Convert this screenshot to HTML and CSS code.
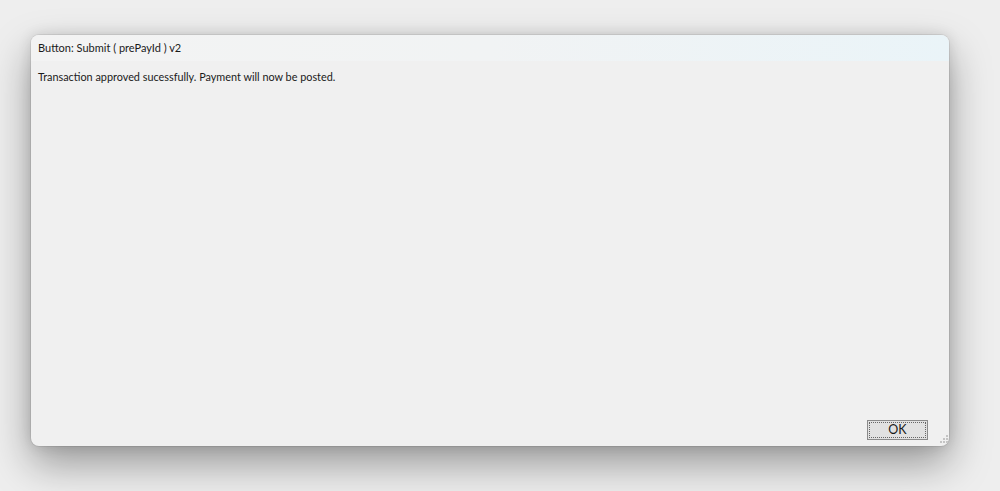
FILE: index.html
```html
<!DOCTYPE html>
<html>
<head>
<meta charset="utf-8">
<link rel="stylesheet" href="styles.css">
</head>
<body>
<div class="stage">
  <div class="window">
    <div class="titlebar">Button: Submit ( prePayId ) v2</div>
    <div class="content">
      <p class="message">Transaction approved sucessfully. Payment will now be posted.</p>
      <div class="actions">
        <button class="ok"><span class="focus">OK</span></button>
      </div>
    </div>
    <svg class="grip" width="10" height="10" viewBox="0 0 10 10">
      <g fill="#c4c4c4">
        <rect x="8" y="0" width="2" height="2"/>
        <rect x="5" y="3" width="2" height="2"/><rect x="8" y="3" width="2" height="2"/>
        <rect x="2" y="6" width="2" height="2"/><rect x="5" y="6" width="2" height="2"/><rect x="8" y="6" width="2" height="2"/>
      </g>
    </svg>
  </div>
</div>
</body>
</html>
```

FILE: styles.css
```css
html, body {
  margin: 0;
  padding: 0;
  background: #eeeeee;
  width: 1000px;
  height: 491px;
  overflow: hidden;
  font-family: "Lato", "Noto Sans", sans-serif;
}
.stage {
  padding: 35px 0 0 31px;
}
.window {
  position: relative;
  width: 918px;
  height: 411px;
  background: #f0f0f0;
  border-radius: 8px;
  box-shadow: 0 0 0 1px rgba(0,0,0,0.07), 0 18px 40px rgba(0,0,0,0.36), 0 0 14px rgba(0,0,0,0.12);
  display: flex;
  flex-direction: column;
  overflow: hidden;
}
.titlebar {
  height: 26px;
  line-height: 26px;
  padding-left: 7px;
  font-size: 11px;
  color: #1a1a1a;
  background: linear-gradient(to right, #f3f3f3 0%, #f1f3f4 50%, #eaf4f8 100%);
}
.content {
  flex: 1;
  display: flex;
  flex-direction: column;
  padding: 0 21px 6px 7px;
}
.message {
  margin: 8px 0 0 0;
  font-size: 10.85px;
  color: #1a1a1a;
  line-height: 16px;
  flex: 1;
}
.actions {
  display: flex;
  justify-content: flex-end;
}
.ok {
  width: 61px;
  height: 20px;
  padding: 1px;
  margin: 0;
  border: 1px solid #8a8a8a;
  background: #e1e1e1;
  font-family: "Lato", "Noto Sans", sans-serif;
  font-size: 12.5px;
  color: #1a1a1a;
  box-sizing: border-box;
  display: flex;
}
.focus {
  flex: 1;
  border: 1px dotted #666;
  display: flex;
  align-items: center;
  justify-content: center;
  line-height: 14px;
}
.grip {
  position: absolute;
  right: 1px;
  bottom: 1px;
}
```
